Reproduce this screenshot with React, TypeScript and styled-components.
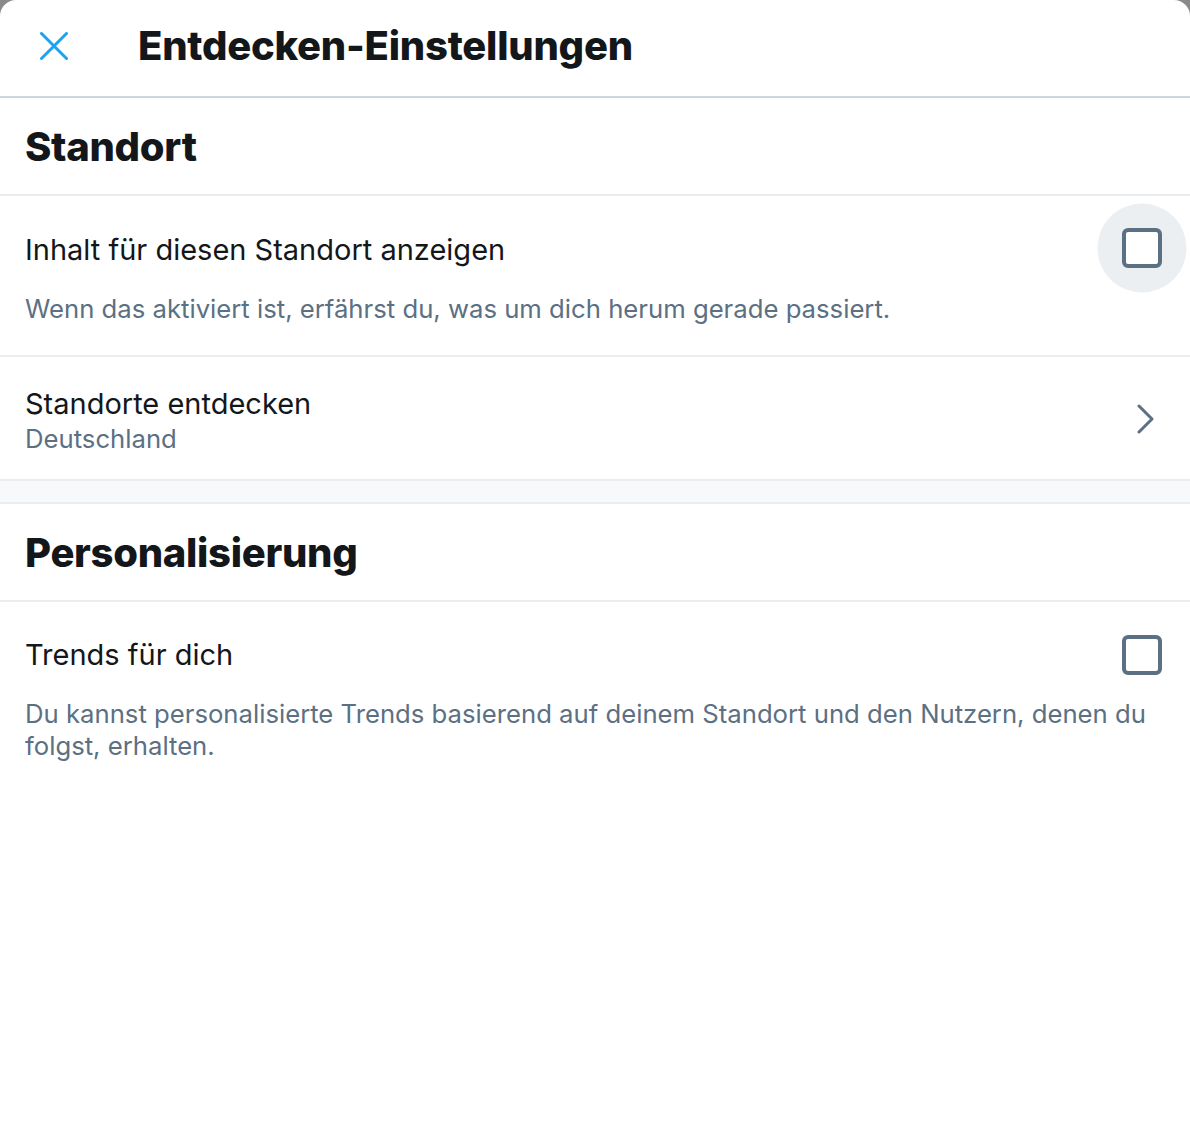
import React from "react";
import styled, { createGlobalStyle } from "styled-components";

const Global = createGlobalStyle`
  html, body { margin: 0; padding: 0; background: #8a8a8a; }
  body { font-family: Inter, "Noto Sans", "Liberation Sans", sans-serif; color: #14171a; }
  * { box-sizing: border-box; }
`;

const Modal = styled.div`
  width: 1190px;
  min-height: 1144px;
  background: #ffffff;
  border-radius: 16px 16px 0 0;
  display: flex;
  flex-direction: column;
`;

const Header = styled.header`
  height: 98px;
  display: flex;
  align-items: center;
  border-bottom: 2px solid #ccd6dd;
  padding-left: 40px;
  gap: 70px;
`;

const CloseButton = styled.button`
  width: 28px;
  height: 28px;
  padding: 0;
  border: none;
  background: transparent;
  display: flex;
  align-items: center;
  justify-content: center;
  margin-top: -4px;
`;

const Title = styled.h1`
  margin: 0;
  font-size: 40px;
  font-weight: 800;
  letter-spacing: -0.25px;
  margin-top: -6px;
`;

const SectionHead = styled.div`
  height: 98px;
  display: flex;
  align-items: center;
  padding: 0 25px;
  border-bottom: 2px solid #ebeef0;
`;

const SectionTitle = styled.h2`
  margin: 0;
  font-size: 40px;
  font-weight: 800;
  letter-spacing: -0.3px;
`;

const OptionRow = styled.div<{ $pad: string; $last?: boolean }>`
  padding: ${(p) => p.$pad};
  border-bottom: ${(p) => (p.$last ? "none" : "2px solid #ebeef0")};
  display: flex;
  flex-direction: column;
`;

const OptionLine = styled.div`
  display: flex;
  align-items: center;
  justify-content: space-between;
  height: 40px;
`;

const Label = styled.span`
  font-size: 29px;
  line-height: 32px;
  color: #14171a;
`;

const Desc = styled.p<{ $top: number }>`
  margin: ${(p) => p.$top}px 0 0;
  font-size: 25.7px;
  line-height: 32px;
  color: #5b7083;
`;

const Sub = styled.span`
  font-size: 25.7px;
  line-height: 32px;
  color: #5b7083;
`;

const LinkRow = styled.div`
  height: 122px;
  padding: 0 35px 0 25px;
  display: flex;
  align-items: center;
  justify-content: space-between;
`;

const LinkText = styled.div`
  display: flex;
  flex-direction: column;
  gap: 3px;
  margin-top: 7px;
`;

const ChevronBox = styled.span`
  display: flex;
  margin-top: 2px;
`;

const Spacer = styled.div`
  height: 25px;
  background: #f7f9fa;
  border-top: 2px solid #ebeef0;
  border-bottom: 2px solid #ebeef0;
`;

const Check = styled.span<{ $hover?: boolean }>`
  position: relative;
  width: 40px;
  height: 40px;
  border: 4px solid #5b7083;
  border-radius: 6px;
  background: #fff;
  &::before {
    content: "";
    display: ${(p) => (p.$hover ? "block" : "none")};
    position: absolute;
    left: 50%;
    top: 50%;
    width: 89px;
    height: 89px;
    border-radius: 50%;
    background: #eceff1;
    transform: translate(-50%, -50%);
    z-index: -1;
  }
`;

const CheckWrap = styled.span<{ $shift?: number }>`
  position: relative;
  z-index: 0;
  display: flex;
  margin-top: ${(p) => p.$shift ?? 0}px;
`;

const XIcon = () => (
  <svg width="28" height="28" viewBox="0 0 28 28">
    <path d="M1.5 1.5 L26.5 26.5 M26.5 1.5 L1.5 26.5" stroke="#1da1f2" strokeWidth="3" strokeLinecap="round" fill="none" />
  </svg>
);

const Chevron = () => (
  <svg width="18" height="30" viewBox="0 0 18 30">
    <path d="M2 2 L15 15 L2 28" stroke="#5b7083" strokeWidth="3" strokeLinecap="round" strokeLinejoin="round" fill="none" />
  </svg>
);

export default function App() {
  return (
    <>
      <Global />
      <Modal>
        <Header>
          <CloseButton aria-label="Schließen">
            <XIcon />
          </CloseButton>
          <Title>Entdecken-Einstellungen</Title>
        </Header>

        <SectionHead>
          <SectionTitle>Standort</SectionTitle>
        </SectionHead>

        <OptionRow $pad="34px 28px 30px 25px">
          <OptionLine>
            <Label>Inhalt für diesen Standort anzeigen</Label>
            <CheckWrap $shift={-4}>
              <Check $hover />
            </CheckWrap>
          </OptionLine>
          <Desc $top={23}>Wenn das aktiviert ist, erfährst du, was um dich herum gerade passiert.</Desc>
        </OptionRow>

        <LinkRow>
          <LinkText>
            <Label>Standorte entdecken</Label>
            <Sub>Deutschland</Sub>
          </LinkText>
          <ChevronBox>
            <Chevron />
          </ChevronBox>
        </LinkRow>

        <Spacer />

        <SectionHead>
          <SectionTitle>Personalisierung</SectionTitle>
        </SectionHead>

        <OptionRow $pad="33px 28px 20px 25px" $last>
          <OptionLine>
            <Label>Trends für dich</Label>
            <CheckWrap>
              <Check />
            </CheckWrap>
          </OptionLine>
          <Desc $top={23}>
            Du kannst personalisierte Trends basierend auf deinem Standort und den Nutzern, denen du folgst, erhalten.
          </Desc>
        </OptionRow>
      </Modal>
    </>
  );
}
